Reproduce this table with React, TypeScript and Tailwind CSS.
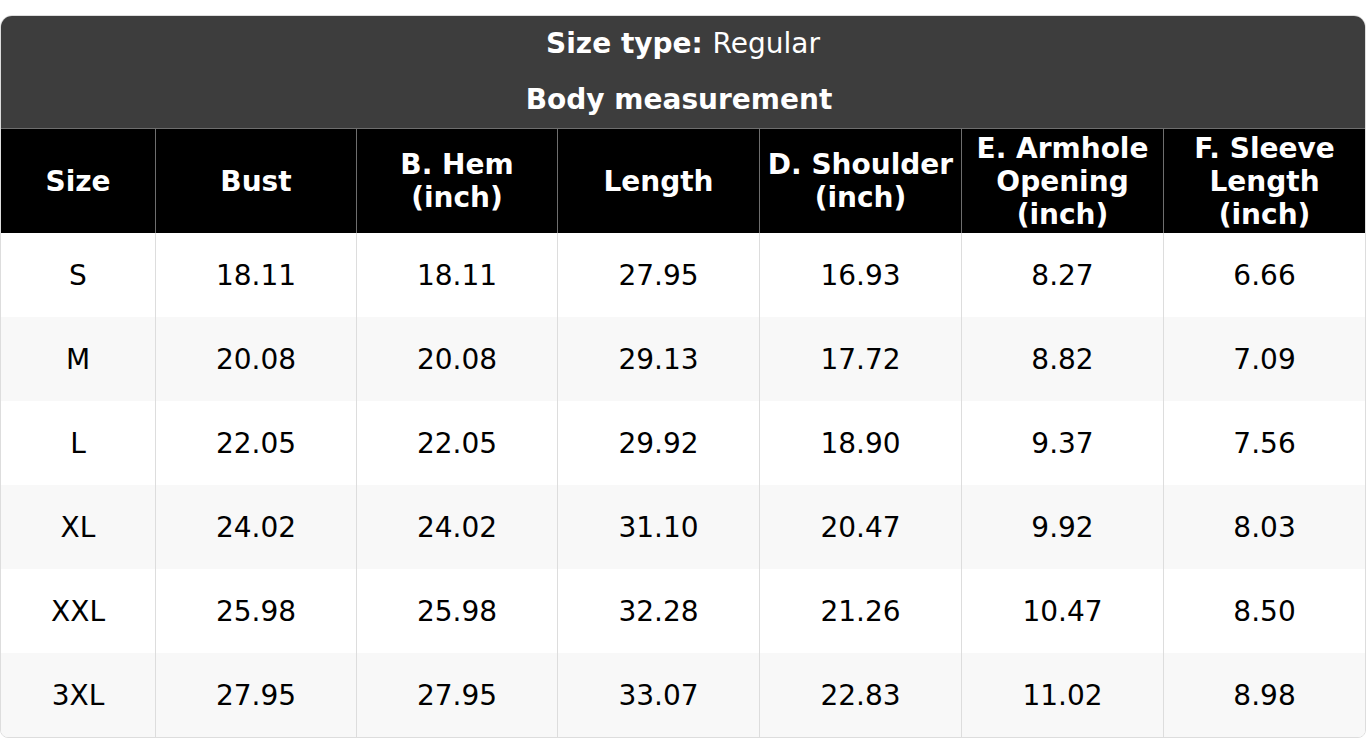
import React from "react";

const headers = [
  ["Size"],
  ["Bust"],
  ["B. Hem", "(inch)"],
  ["Length"],
  ["D. Shoulder", "(inch)"],
  ["E. Armhole", "Opening", "(inch)"],
  ["F. Sleeve", "Length", "(inch)"],
];

const rows = [
  ["S", "18.11", "18.11", "27.95", "16.93", "8.27", "6.66"],
  ["M", "20.08", "20.08", "29.13", "17.72", "8.82", "7.09"],
  ["L", "22.05", "22.05", "29.92", "18.90", "9.37", "7.56"],
  ["XL", "24.02", "24.02", "31.10", "20.47", "9.92", "8.03"],
  ["XXL", "25.98", "25.98", "32.28", "21.26", "10.47", "8.50"],
  ["3XL", "27.95", "27.95", "33.07", "22.83", "11.02", "8.98"],
];

const widths = [154, 201, 201, 202, 202, 202, 202];

export default function App() {
  return (
    <div
      className="w-[1366px] h-[739px] bg-white pt-[15px]"
      style={{ fontFamily: '"DejaVu Sans", sans-serif' }}
    >
      <div className="w-[1366px] rounded-t-[12px] rounded-b-[8px] border border-[#dddddd] overflow-hidden">
        <table className="w-full table-fixed border-separate border-spacing-0 text-[28px] leading-[33px]">
          <colgroup>
            {widths.map((w, i) => (
              <col key={i} style={{ width: w }} />
            ))}
          </colgroup>
          <thead>
            <tr className="bg-[#3d3d3d] text-white">
              <th colSpan={7} className="h-[55px] p-0 text-center align-middle">
                <span className="font-bold">Size type:</span>{" "}
                <span className="font-normal">Regular</span>
              </th>
            </tr>
            <tr className="bg-[#3d3d3d] text-white">
              <th
                colSpan={7}
                className="h-[58px] p-0 pr-[8px] text-center align-middle font-bold border-b border-[#6e6e6e]"
              >
                Body measurement
              </th>
            </tr>
            <tr className="bg-black text-white">
              {headers.map((h, i) => (
                <th
                  key={i}
                  className={`h-[104px] p-0 text-center align-middle font-bold ${
                    i > 0 ? "border-l border-[#6e6e6e]" : ""
                  }`}
                >
                  {h.map((line, j) => (
                    <div key={j}>{line}</div>
                  ))}
                </th>
              ))}
            </tr>
          </thead>
          <tbody>
            {rows.map((r, ri) => (
              <tr key={ri} className={ri % 2 === 1 ? "bg-[#f8f8f8]" : "bg-white"}>
                {r.map((c, ci) => (
                  <td
                    key={ci}
                    className={`h-[84px] p-0 text-center align-middle text-black ${
                      ci > 0 ? "border-l border-[#dddddd]" : ""
                    }`}
                  >
                    {c}
                  </td>
                ))}
              </tr>
            ))}
          </tbody>
        </table>
      </div>
    </div>
  );
}
